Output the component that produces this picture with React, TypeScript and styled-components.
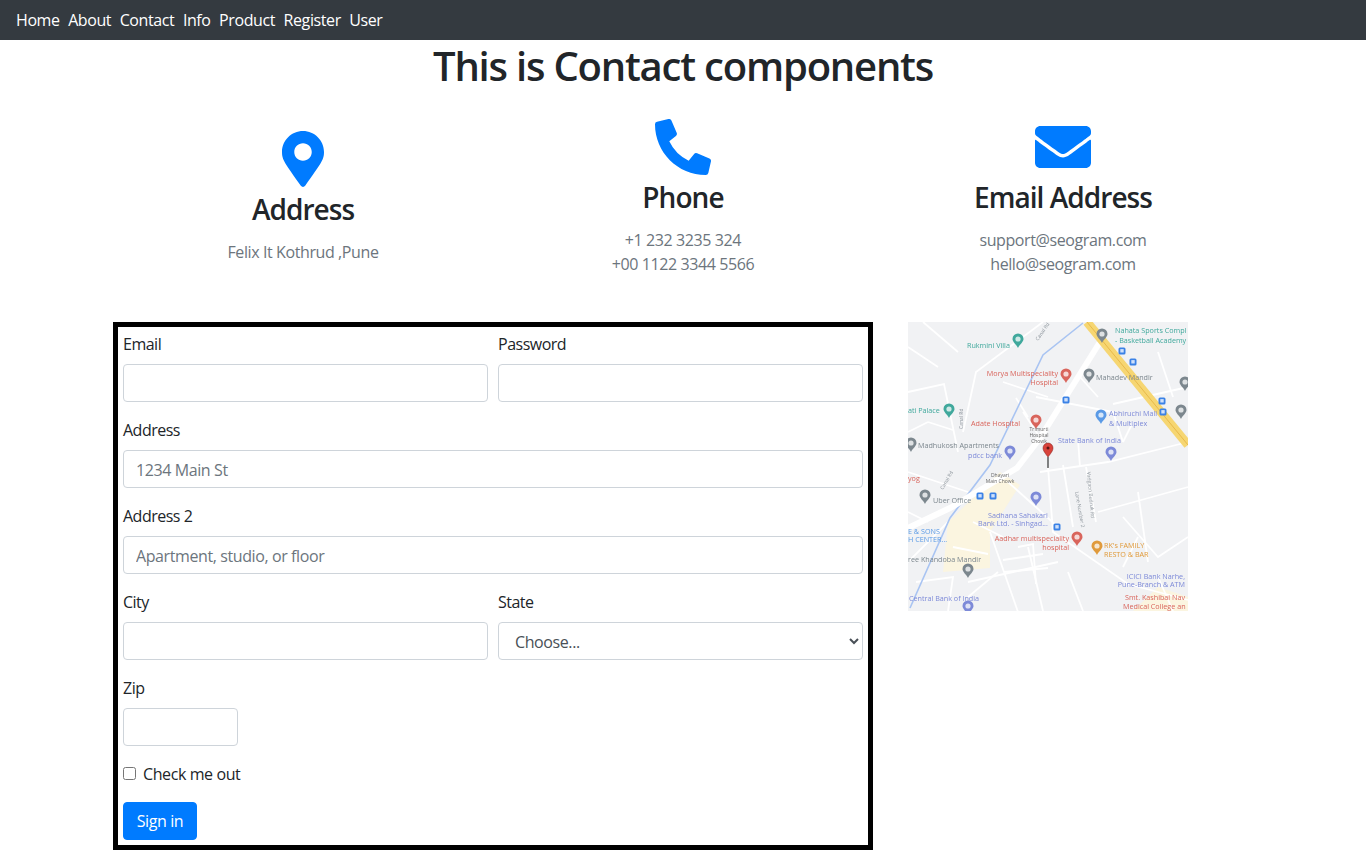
import React from 'react'
import styled, { createGlobalStyle } from 'styled-components'
import { FaMapMarkerAlt, FaPhoneAlt, FaEnvelope } from 'react-icons/fa'

const FONT = '"Open Sans", "Noto Sans", sans-serif'

const GlobalStyle = createGlobalStyle`
  * { box-sizing: border-box; }
  html, body { margin: 0; padding: 0; background: #fff; }
  body {
    font-family: ${FONT};
    font-size: 16px;
    line-height: 1.5;
    color: #212529;
    letter-spacing: -0.4px;
  }
`

const NavBar = styled.nav`
  display: flex;
  align-items: center;
  gap: 8.5px;
  height: 40px;
  padding: 0 16px;
  background: #343a40;
`

const NavLink = styled.a`
  color: #fff;
  font-size: 16px;
  text-decoration: none;
`

const Title = styled.h1`
  height: 48px;
  margin: 0;
  padding-top: 2px;
  font-size: 40px;
  line-height: 48px;
  font-weight: 600;
  text-align: center;
  letter-spacing: -1.2px;
`

const Container = styled.div`
  width: 1140px;
  margin: 0 auto;
`

const InfoRow = styled.div`
  display: grid;
  grid-template-columns: repeat(3, 380px);
  align-items: center;
  padding-top: 31px;
  margin-bottom: 46px;
`

const InfoCard = styled.div`
  display: flex;
  flex-direction: column;
  align-items: center;
  text-align: center;
  svg {
    display: block;
    width: 56px;
    height: 56px;
    color: #007bff;
  }
`

const InfoHeading = styled.h3`
  margin: 5px 0 14px;
  font-size: 28px;
  line-height: 34px;
  font-weight: 600;
  letter-spacing: -0.95px;
`

const InfoText = styled.p`
  margin: 0;
  color: #6c757d;
`

const Bottom = styled.div`
  display: flex;
  align-items: flex-start;
`

const FormBox = styled.form`
  width: 760px;
  padding: 5px;
  border: 5px solid #000;
`

const FieldRow = styled.div`
  display: grid;
  grid-template-columns: 1fr 1fr;
  column-gap: 10px;
`

const Field = styled.div<{ $width?: number }>`
  margin-bottom: 16px;
  width: ${(p) => (p.$width ? `${p.$width}px` : 'auto')};
`

const Label = styled.label`
  display: block;
  margin-bottom: 8px;
  letter-spacing: -0.5px;
`

const Input = styled.input`
  display: block;
  width: 100%;
  height: 38px;
  padding: 7px 12px 5px;
  border: 1px solid #ced4da;
  border-radius: 4px;
  background: #fff;
  color: #495057;
  font: inherit;
  letter-spacing: inherit;
  &::placeholder {
    color: #6c757d;
    opacity: 1;
  }
`

const Select = styled.select`
  display: block;
  width: 100%;
  height: 38px;
  padding: 7px 12px 5px;
  border: 1px solid #ced4da;
  border-radius: 4px;
  background: #fff;
  color: #495057;
  font: inherit;
  letter-spacing: inherit;
`

const CheckRow = styled.div`
  display: flex;
  align-items: center;
  height: 24px;
  margin-bottom: 16px;
  input {
    width: 13px;
    height: 13px;
    margin: -2px 7px 0 0;
  }
`

const SubmitButton = styled.button`
  display: block;
  height: 38px;
  width: 74px;
  padding: 0;
  border: 1px solid #007bff;
  border-radius: 4px;
  background: #007bff;
  color: #fff;
  font: inherit;
  letter-spacing: inherit;
`

const MapFrame = styled.div`
  width: 280px;
  height: 289px;
  margin-left: 35px;
  overflow: hidden;
  svg {
    display: block;
  }
  text {
    font-family: ${FONT};
    letter-spacing: 0;
  }
`

type MapLabel = [number, number, string, string, ('start' | 'end')?]

const TEAL = '#3fa89c'
const RED = '#d9655c'
const BLUEL = '#7d8ad8'
const GRAY = '#7c878e'
const ORANGE = '#e09a3a'
const SKY = '#5a9ae6'

const labels: MapLabel[] = [
  [59, 26, 'Rukmini Villa', TEAL],
  [207, 11, 'Nahata Sports Compl', TEAL],
  [207, 21, '- Basketball Academy', TEAL],
  [150, 54, 'Morya Multispeciality', RED, 'end'],
  [150, 63, 'Hospital', RED, 'end'],
  [188, 58, 'Mahadev Mandir', GRAY],
  [0, 91, 'ati Palace', TEAL],
  [201, 94, 'Abhiruchi Mall', BLUEL],
  [201, 104, '& Multiplex', BLUEL],
  [112, 104, 'Adate Hospital', RED, 'end'],
  [150, 121, 'State Bank of India', BLUEL],
  [10, 126, 'Madhukosh Apartments', GRAY],
  [60, 136, 'pdcc bank', BLUEL],
  [0, 159, 'yog', RED],
  [25, 181, 'Uber Office', GRAY],
  [80, 196, 'Sadhana Sahakari', BLUEL],
  [70, 204, 'Bank Ltd. - Sinhgad...', BLUEL],
  [0, 212, 'E & SONS', SKY],
  [0, 220, 'H CENTER...', SKY],
  [161, 219, 'Aadhar multispeciality', RED, 'end'],
  [161, 228, 'hospital', RED, 'end'],
  [196, 226, "RK's FAMILY", ORANGE],
  [196, 235, 'RESTO & BAR', ORANGE],
  [0, 240, 'ree Khandoba Mandir', GRAY],
  [277, 257, 'ICICI Bank Narhe,', BLUEL, 'end'],
  [277, 265, 'Pune-Branch & ATM', BLUEL, 'end'],
  [1, 279, 'Central Bank of India', BLUEL],
  [217, 278, 'Smt. Kashibai Nav', RED],
  [215, 287, 'Medical College an', RED],
]

const pins: [number, number, string][] = [
  [110, 19, TEAL],
  [158, 54, RED],
  [181, 54, GRAY],
  [41, 89, TEAL],
  [128, 100, RED],
  [193, 95, SKY],
  [3, 123, GRAY],
  [102, 131, BLUEL],
  [203, 132, BLUEL],
  [17, 175, GRAY],
  [128, 177, BLUEL],
  [169, 217, RED],
  [189, 226, ORANGE],
  [60, 249, GRAY],
  [60, 286, BLUEL],
  [273, 90, GRAY],
  [194, 14, GRAY],
  [277, 62, GRAY],
]

const stops: [number, number][] = [
  [214, 29],
  [225, 40],
  [158, 78],
  [254, 79],
  [255, 90],
  [72, 174],
  [85, 174],
  [149, 205],
]

const thinRoads = [
  'M0 70 L36 62 L50 130',
  'M55 110 L68 50 L135 0',
  'M0 25 L30 45 M50 30 L15 0',
  'M128 75 L205 90 L215 120',
  'M205 82 L280 65',
  'M140 145 L145 210 L220 262 L280 278',
  'M132 150 L200 140 L280 120',
  'M155 143 L165 205',
  'M178 145 L188 200',
  'M190 190 L280 165 M230 170 L240 240',
  'M82 210 L110 290 M60 260 L150 240 M120 225 L135 289',
  'M40 200 L0 240 M0 150 L60 170',
  'M215 195 L250 235 L280 215',
  'M100 160 L150 205',
  'M172 55 L190 75 M95 60 L140 75',
  'M250 30 L265 75',
  'M90 250 L60 275 M160 250 L175 289',
  'M110 225 L125 222 L128 262 M95 238 L135 232 M96 250 L140 246',
  'M115 90 L135 120 M108 76 L120 95',
  'M170 118 L172 145 M215 120 L225 100',
  'M230 215 L215 245 M250 255 L265 289',
  'M0 190 L20 200 M8 260 L45 255 L40 289',
  'M45 225 L80 232 M65 200 L95 215',
  'M20 100 L45 108 M0 110 L20 100',
]

const MapPicture = () => (
  <svg width="280" height="289" viewBox="0 0 280 289">
    <defs>
      <filter id="soft">
        <feGaussianBlur stdDeviation="0.45" />
      </filter>
    </defs>
    <g filter="url(#soft)">
      <rect width="280" height="289" fill="#f1f2f4" />
      <path d="M35 250 L82 246 L82 210 L112 163 L92 150 L40 200 Z" fill="#fbf5e0" />
      <path d="M225 289 L250 265 L280 275 L280 289 Z" fill="#fbf5e0" />
      {thinRoads.map((d) => (
        <path key={d} d={d} stroke="#fff" strokeWidth="1.8" fill="none" />
      ))}
      <path d="M175 1 L135 33 L82 143 L42 196 L2 286" stroke="#a9c4f2" strokeWidth="1.6" fill="none" />
      <path d="M192 20 L132 116 L109 146 L42 186 L0 206" stroke="#fff" strokeWidth="6" fill="none" />
      <path d="M179 0 L280 123" stroke="#f6d672" strokeWidth="9" fill="none" />
      <path d="M179 0 L280 123" stroke="#e8b94a" strokeWidth="1" fill="none" />
      {labels.map(([x, y, text, color, anchor]) => (
        <text key={text} x={x} y={y} fontSize="7.2" fill={color} textAnchor={anchor || 'start'}>
          {text}
        </text>
      ))}
      {pins.map(([x, y, color]) => (
        <path
          key={`${x}-${y}`}
          d={`M${x} ${y + 7} C${x - 2} ${y + 3} ${x - 5.5} ${y + 1} ${x - 5.5} ${y - 2} A5.5 5.5 0 1 1 ${x + 5.5} ${y - 2} C${x + 5.5} ${y + 1} ${x + 2} ${y + 3} ${x} ${y + 7} Z`}
          fill={color}
        />
      ))}
      {pins.map(([x, y]) => (
        <circle key={`c-${x}-${y}`} cx={x} cy={y - 2} r="2.6" fill="#fff" opacity="0.75" />
      ))}
      {stops.map(([x, y]) => (
        <g key={`${x}-${y}`}>
          <rect x={x - 3.5} y={y - 3.5} width="7" height="7" rx="1.5" fill="#3b82e6" />
          <rect x={x - 1.7} y={y - 1.9} width="3.4" height="3.4" fill="#cfe0fa" />
        </g>
      ))}
      <path d="M140 135 C136 130 135 128 135 126 A5 5 0 1 1 145 126 C145 128 144 130 140 135 Z" fill="#d8423a" stroke="#7a1f1a" strokeWidth="0.5" />
      <circle cx="140" cy="126" r="1.5" fill="#5a1512" />
      <path d="M140 135 L140 146" stroke="#333" strokeWidth="1.2" />
      <text x="131" y="109" fontSize="5" fill="#666" textAnchor="middle">Trimurti</text>
      <text x="131" y="115" fontSize="5" fill="#666" textAnchor="middle">Hospital</text>
      <text x="131" y="121" fontSize="5" fill="#666" textAnchor="middle">Chowk</text>
      <text x="92" y="155" fontSize="5" fill="#666" textAnchor="middle">Dhayari</text>
      <text x="92" y="161" fontSize="5" fill="#666" textAnchor="middle">Main Chowk</text>
      <text x="0" y="0" fontSize="5" fill="#8a9299" transform="translate(130 19) rotate(-55)">Canal Rd</text>
      <text x="0" y="0" fontSize="5" fill="#8a9299" transform="translate(55 107) rotate(-90)">Canal Rd</text>
      <text x="0" y="0" fontSize="5" fill="#8a9299" transform="translate(35 168) rotate(-60)">Canal Rd</text>
      <text x="0" y="0" fontSize="5" fill="#8a9299" transform="translate(167 170) rotate(80)">Lane Number 2</text>
      <text x="0" y="0" fontSize="5" fill="#8a9299" transform="translate(179 150) rotate(85)">Vadgaon Budruk Rd</text>
    </g>
  </svg>
)

const navItems = ['Home', 'About', 'Contact', 'Info', 'Product', 'Register', 'User']

const App = () => (
  <>
    <GlobalStyle />
    <NavBar>
      {navItems.map((item) => (
        <NavLink href="#" key={item}>
          {item}
        </NavLink>
      ))}
    </NavBar>
    <Title>This is Contact components</Title>
    <Container>
      <InfoRow>
        <InfoCard>
          <FaMapMarkerAlt />
          <InfoHeading>Address</InfoHeading>
          <InfoText>Felix It Kothrud ,Pune</InfoText>
        </InfoCard>
        <InfoCard>
          <FaPhoneAlt />
          <InfoHeading>Phone</InfoHeading>
          <InfoText>+1 232 3235 324</InfoText>
          <InfoText>+00 1122 3344 5566</InfoText>
        </InfoCard>
        <InfoCard>
          <FaEnvelope />
          <InfoHeading>Email Address</InfoHeading>
          <InfoText>support@seogram.com</InfoText>
          <InfoText>hello@seogram.com</InfoText>
        </InfoCard>
      </InfoRow>
      <Bottom>
        <FormBox onSubmit={(e) => e.preventDefault()}>
          <FieldRow>
            <Field>
              <Label>Email</Label>
              <Input type="email" />
            </Field>
            <Field>
              <Label>Password</Label>
              <Input type="password" />
            </Field>
          </FieldRow>
          <Field>
            <Label>Address</Label>
            <Input placeholder="1234 Main St" />
          </Field>
          <Field>
            <Label>Address 2</Label>
            <Input placeholder="Apartment, studio, or floor" />
          </Field>
          <FieldRow>
            <Field>
              <Label>City</Label>
              <Input />
            </Field>
            <Field>
              <Label>State</Label>
              <Select defaultValue="">
                <option value="">Choose...</option>
                <option value="1">...</option>
              </Select>
            </Field>
          </FieldRow>
          <Field $width={115}>
            <Label>Zip</Label>
            <Input />
          </Field>
          <CheckRow>
            <input type="checkbox" id="check" />
            <label htmlFor="check">Check me out</label>
          </CheckRow>
          <SubmitButton type="submit">Sign in</SubmitButton>
        </FormBox>
        <MapFrame>
          <MapPicture />
        </MapFrame>
      </Bottom>
    </Container>
  </>
)

export default App
